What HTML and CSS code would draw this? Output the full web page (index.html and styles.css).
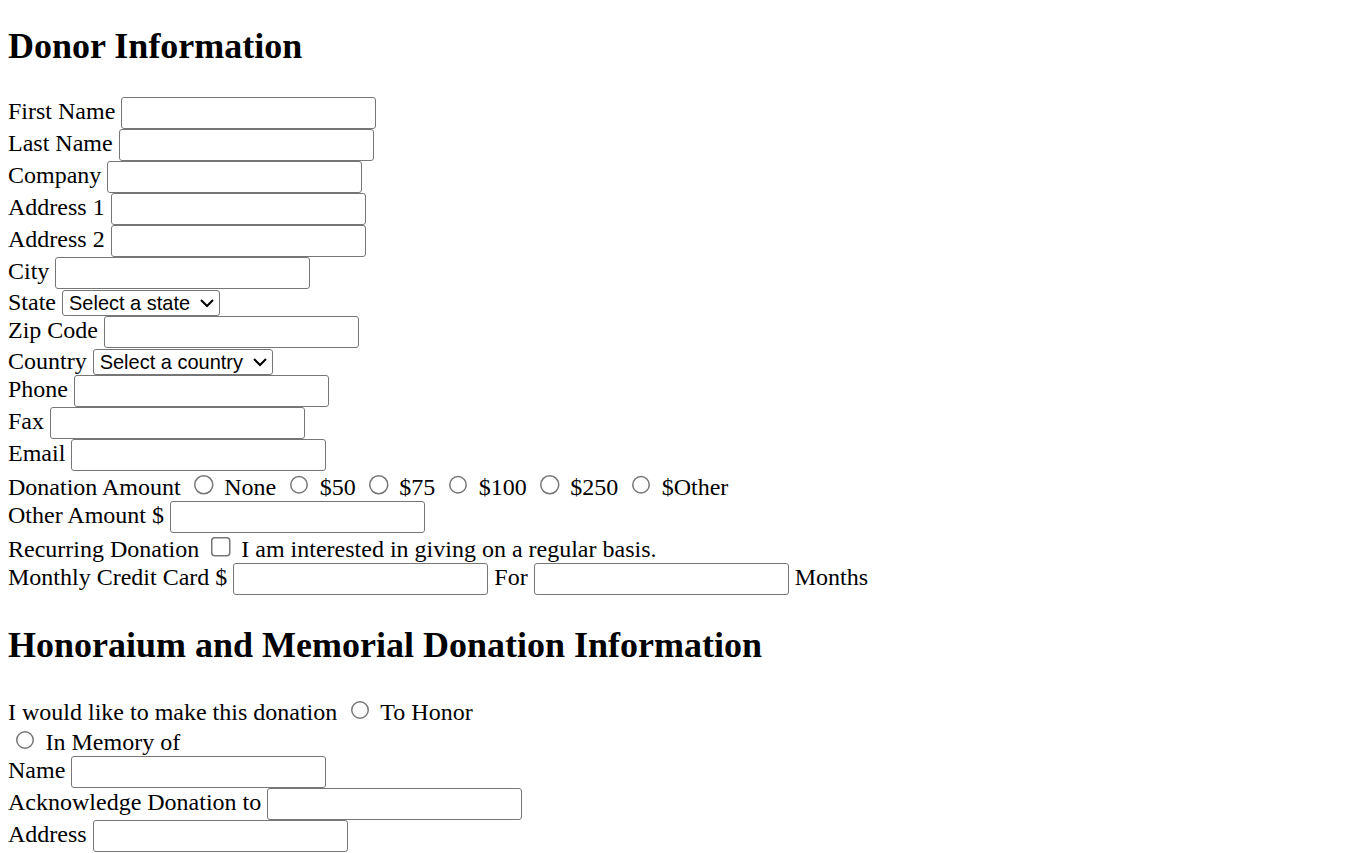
FILE: index.html
```html
<!DOCTYPE html>
<html>
<head>
<meta charset="utf-8">
<title>Donation Form</title>
<link rel="stylesheet" href="styles.css">
</head>
<body class="page">
<form class="form">
<h2 class="section-title section-title--first">Donor Information</h2>
<label>First Name</label> <input class="field" type="text"><br>
<label>Last Name</label> <input class="field" type="text"><br>
<label>Company</label> <input class="field" type="text"><br>
<label>Address 1</label> <input class="field" type="text"><br>
<label>Address 2</label> <input class="field" type="text"><br>
<label>City</label> <input class="field" type="text"><br>
<label>State</label> <select class="choice choice--state"><option>Select a state</option></select><br>
<label>Zip Code</label> <input class="field" type="text"><br>
<label>Country</label> <select class="choice choice--country"><option>Select a country</option></select><br>
<label>Phone</label> <input class="field" type="text"><br>
<label>Fax</label> <input class="field" type="text"><br>
<label>Email</label> <input class="field" type="text"><br>
<label>Donation Amount</label> <input class="radio" type="radio" name="amt"> None <input class="radio" type="radio" name="amt"> $50 <input class="radio" type="radio" name="amt"> $75 <input class="radio" type="radio" name="amt"> $100 <input class="radio" type="radio" name="amt"> $250 <input class="radio" type="radio" name="amt"> $Other<br>
<label>Other Amount $</label> <input class="field" type="text"><br>
<label>Recurring Donation</label> <input class="check" type="checkbox"> I am interested in giving on a regular basis.<br>
<label>Monthly Credit Card $</label> <input class="field" type="text"> For <input class="field" type="text"> Months<br>
<h2 class="section-title">Honoraium and Memorial Donation Information</h2>
<label>I would like to make this donation</label> <input class="radio" type="radio" name="hon"> To Honor<br>
<input class="radio" type="radio" name="hon"> In Memory of<br>
<label>Name</label> <input class="field" type="text"><br>
<label>Acknowledge Donation to</label> <input class="field" type="text"><br>
<label>Address</label> <input class="field" type="text"><br>
</form>
</body>
</html>
```
FILE: styles.css
```css
.page {
  margin: 0 8px 8px;
  background: #fff;
  color: #000;
}
.form {
  zoom: 1.5;
  font-family: "Liberation Serif", "Times New Roman", serif;
  font-size: 16px;
}
.section-title {
  font-size: 1.5em;
  font-weight: bold;
  margin: 0.83em 0;
}
.section-title--first {
  margin-top: 16.6px;
}
.field {
  font-family: "Liberation Sans", Arial, sans-serif;
  font-size: 13.333px;
  box-sizing: border-box;
  width: 170px;
  height: 21.333px;
  padding: 1px 2px;
  border: 1px solid #767676;
  border-radius: 2px;
  margin: 0;
  background: #fff;
}
.choice {
  font-family: "Liberation Sans", Arial, sans-serif;
  font-size: 13.333px;
  box-sizing: border-box;
  height: 17.333px;
  padding: 0;
  border: 1px solid #767676;
  border-radius: 2px;
  background: #fff;
  color: #000;
}
.choice--state {
  width: 105.333px;
}
.choice--country {
  width: 120px;
}
.radio {
  margin: 3px 3px 0 5px;
}
.check {
  margin: 3px 3px 3px 4px;
}
```
